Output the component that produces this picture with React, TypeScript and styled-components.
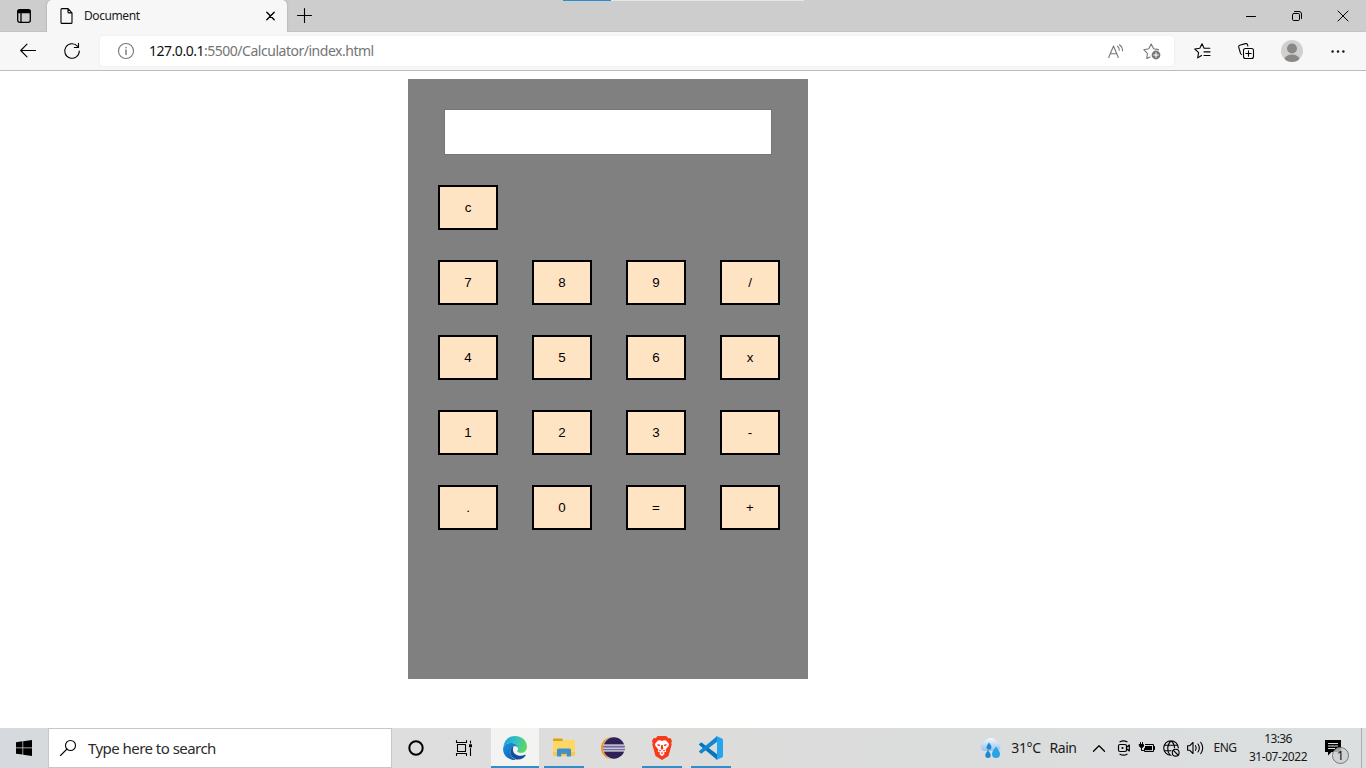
import React from 'react';
import styled, { createGlobalStyle } from 'styled-components';

const ui = '"Noto Sans", "Open Sans", sans-serif';

const GlobalStyle = createGlobalStyle`
  * { box-sizing: border-box; }
  html, body { margin: 0; padding: 0; background: #fff; overflow: hidden; }
`;

const Screen = styled.div`
  display: flex;
  flex-direction: column;
  width: 1366px;
  height: 768px;
  font-family: ${ui};
  background: #fff;
`;

const Glyph = styled.svg<{ $stroke?: number }>`
  display: block;
  flex: none;
  overflow: visible;
  fill: none;
  stroke: ${p => (p.$stroke === 0 ? 'none' : 'currentColor')};
  stroke-width: ${p => p.$stroke ?? 1.1};
  stroke-linecap: round;
  stroke-linejoin: round;
`;

const Slot = styled.div<{ $w: number }>`
  flex: none;
  width: ${p => p.$w}px;
  height: 100%;
  display: flex;
  align-items: center;
  justify-content: center;
`;

const Label = styled.span<{ $size: number; $track?: number; $color?: string }>`
  font-size: ${p => p.$size}px;
  letter-spacing: ${p => p.$track ?? 0}px;
  color: ${p => p.$color ?? '#1a1a1a'};
  line-height: 18px;
  white-space: pre;
`;

const TabStrip = styled.header`
  position: relative;
  display: flex;
  height: 32px;
  background: #cdcdcd;
  box-shadow: inset 0 -1px 0 #c3c3c3;
`;

const Progress = styled.div`
  position: absolute;
  top: 0;
  left: 563px;
  width: 241px;
  height: 1px;
  background: linear-gradient(to right, #2690cf 48px, #e6e6e6 48px);
`;

const Tab = styled.div`
  display: flex;
  align-items: center;
  width: 240px;
  height: 32px;
  padding: 0 12px 0 13px;
  background: #f7f7f7;
  border-radius: 5px 5px 0 0;
  box-shadow: 0 0 2px rgba(0, 0, 0, 0.25);
  clip-path: inset(0 -3px 0 -3px);
`;

const TabTitle = styled(Label)`
  flex: 1;
  margin-left: 11px;
`;

const WindowButtons = styled.div`
  display: flex;
  margin-left: auto;
`;

const Toolbar = styled.nav`
  display: flex;
  align-items: center;
  height: 39px;
  padding: 0 5px 0 6px;
  background: #f7f7f7;
  border-bottom: 1px solid #bcbcbc;
`;

const AddressBar = styled.div`
  display: flex;
  align-items: center;
  width: 1074px;
  height: 30px;
  margin: 0 6px;
  padding: 0 4px 0 18px;
  background: #fff;
  border-radius: 3px;
  box-shadow: 0 0 2px rgba(0, 0, 0, 0.08);
`;

const Url = styled(Label)`
  flex: 1;
  margin-left: 15px;
`;

const Muted = styled.span`
  color: #757575;
`;

const Page = styled.main`
  flex: 1;
  padding: 8px 0 0 408px;
`;

const Calculator = styled.section`
  display: flex;
  flex-direction: column;
  width: 400px;
  height: 600px;
  padding: 30px 28px 0 30px;
  background: #808080;
`;

const Display = styled.input`
  width: 328px;
  height: 46px;
  margin: 0 0 30px 6px;
  padding: 1px 2px;
  background: #fff;
  border: 1px solid #767676;
  border-radius: 0;
  outline: none;
`;

const KeyRow = styled.div`
  display: flex;
  gap: 34px;
  margin-bottom: 30px;
`;

const Key = styled.button`
  width: 60px;
  height: 45px;
  padding: 0 0 1px;
  font: 13.333px "Liberation Sans", Arial, sans-serif;
  color: #000;
  background: #ffe4c4;
  border: 2px solid #000;
  border-radius: 0;
`;

const Taskbar = styled.footer`
  display: flex;
  align-items: center;
  height: 40px;
  background: linear-gradient(to right, #d6d9dd, #dedede 400px, #dcdcdb 740px, #dbdddd 1000px, #dcdfe0);
`;

const SearchBox = styled.div`
  display: flex;
  align-items: center;
  width: 344px;
  height: 40px;
  padding-left: 11px;
  background: #fff;
  border: 1px solid #c6c6c6;
`;

const SearchText = styled(Label)`
  margin-left: 12px;
`;

const Apps = styled.div`
  display: flex;
  gap: 1px;
  height: 100%;
  margin-left: 3px;
`;

const AppButton = styled.div<{ $state: 'active' | 'running' | 'idle' }>`
  display: flex;
  align-items: center;
  justify-content: center;
  width: 48px;
  height: 40px;
  background-color: ${p => (p.$state === 'active' ? '#f3f3f1' : 'transparent')};
  background-image: ${p => (p.$state === 'idle' ? 'none' : 'linear-gradient(#2d8fcb, #2d8fcb)')};
  background-repeat: no-repeat;
  background-position: center bottom;
  background-size: ${p => (p.$state === 'active' ? '48px' : '40px')} 2px;
`;

const Tray = styled.div`
  display: flex;
  align-items: center;
  height: 100%;
  margin-left: auto;
`;

const Clock = styled.div`
  display: flex;
  flex-direction: column;
  align-items: center;
  width: 70px;
  margin-right: 5px;
  padding-bottom: 1px;
`;

const Notifications = styled.div`
  position: relative;
  display: flex;
  align-items: center;
  width: 43px;
  height: 100%;
  padding-left: 7px;
`;

const Badge = styled.span`
  position: absolute;
  left: 14px;
  top: 19px;
  width: 17px;
  height: 17px;
  border: 1px solid #777;
  border-radius: 50%;
  background: rgba(205, 205, 205, 0.8);
  font-size: 13px;
  line-height: 15px;
  text-align: center;
  color: #111;
`;

const ShowDesktop = styled.div`
  width: 5px;
  height: 100%;
  border-left: 1px solid #a9abad;
`;

const rows = [['c'], ['7', '8', '9', '/'], ['4', '5', '6', 'x'], ['1', '2', '3', '-'], ['.', '0', '=', '+']];

function EdgeLogo() {
  return (
    <Glyph width="24" height="24" viewBox="0 0 24 24" $stroke={0}>
      <defs>
        <linearGradient id="edgeTop" x1="0" y1="0.3" x2="1" y2="0.5">
          <stop offset="0" stopColor="#1f9fdc" />
          <stop offset=".5" stopColor="#2fc3c6" />
          <stop offset="1" stopColor="#62d75a" />
        </linearGradient>
        <linearGradient id="edgeLeft" x1="0" y1="0" x2=".6" y2="1">
          <stop offset="0" stopColor="#1b97df" />
          <stop offset="1" stopColor="#1260b4" />
        </linearGradient>
      </defs>
      <path fill="url(#edgeTop)" d="M.4 10.8C1.2 4.400 6 0 12 0c7.500 0 12 5.300 12 10.700 0 3.800-2.800 6.100-6.100 6.100-2.300 0-3.700-.7-3.700-1.500 0-.5.9-1 .9-2.700C15.100 9.500 12 7 8.200 7 4.600 7 1.700 8.600.4 10.800Z" />
      <path fill="url(#edgeLeft)" d="M.2 11.700C.8 8.900 4 6.900 8 6.900c4 0 7.100 2.700 7.100 5.400-.8-1.500-2.200-2.300-3.500-2.300-2.300.8-4.200 3-4.200 5.900 0 3.300 2.100 6.500 5.500 8C5.800 24.500-.8 19 .2 11.700Z" />
      <path fill="#124f9b" d="M10.700 10.300c-2 1-3.300 3-3.300 5.600 0 4 3.300 7.600 7.800 7.700 3 0 5.800-1.900 7.400-4.200.3-.5 0-.8-.5-.6-5.500 2.500-12.200.2-12.200-5.500 0-1.100.3-2.100.8-3Z" />
    </Glyph>
  );
}

function FolderLogo() {
  return (
    <Glyph width="22" height="20" viewBox="0 0 22 20" $stroke={0}>
      <path fill="#dfa20c" d="M0 1.500C0 1 .4.6 1 .6h8l1.500 2.400H0Z" />
      <path fill="#ffd767" d="M0 3h10.500l1-1.200H21c.6 0 1 .4 1 1V18H0Z" />
      <path fill="#f8c94f" d="M0 14h22v4H0Z" />
      <path fill="#3c8fd0" d="M4 18.500V12.200c0-1 .7-1.700 1.700-1.700h10.600c1 0 1.700.7 1.700 1.700v6.300h-4.200v-4H8.200v4Z" />
      <path fill="#2477bd" d="M8.200 14.500h5.600v1.200H8.200Z" />
    </Glyph>
  );
}

function EclipseLogo() {
  return (
    <Glyph width="24" height="22" viewBox="0 0 24 22" $stroke={0}>
      <circle cx="10.800" cy="11" r="10.800" fill="#f7941e" />
      <circle cx="13" cy="11" r="11" fill="#dedddc" />
      <circle cx="13" cy="11" r="10.700" fill="#2c2255" />
      <path fill="#fff" d="M2.500 7.500h21v1.200h-21ZM2.200 10.400h21.600v1.300H2.200ZM2.500 13.200h21v1.200h-21Z" />
      <path fill="#8b83ba" d="M2.300 8.700h21.400v1.100H2.300ZM2.300 12.200h21.400v1H2.300Z" />
    </Glyph>
  );
}

function BraveLogo() {
  return (
    <Glyph width="20" height="24" viewBox="0 0 20 24" $stroke={0}>
      <path fill="#f83a1b" d="M5.700 0h8.600l2 2.200 2-.2L20 4.700 19.300 7l.4 1.400-3.200 11.500L10 24l-6.500-4.100L.3 8.400.7 7 0 4.700 1.700 2l2 .2Z" />
      <path fill="#fff" d="M5.900 4.400 8 4.200 10 4.900l2-.7 2.100.2 3 3.600-.6 2.100-2.800 3.400.5 1.900-2.500 1.300 1 1.300L10 20.300 7.300 18l1-1.300-2.500-1.300.5-1.900L3.500 10.100 2.900 8Z" />
      <path fill="#f83a1b" d="m5.100 8 3.200.8-.7 1.500-1.500-.2ZM14.900 8l-3.200.8.7 1.500 1.500-.2ZM9.200 9h1.600l.5 3.900-1.300.8-1.300-.8ZM6.500 13.500l3 1.300-1.700.8ZM13.500 13.500l-3 1.300 1.700.8ZM8.700 17l1.300-.8 1.300.8-1.300 1Z" />
    </Glyph>
  );
}

function CodeLogo() {
  return (
    <Glyph width="24" height="24" viewBox="0 0 24 24" $stroke={0}>
      <path fill="#0874bc" d="M0 8.300 1.600 6.800Q2.200 6.400 2.900 6.800L18 18.200v5.600L.2 8.900Q-.2 8.600 0 8.300Z" />
      <path fill="#1187cf" d="M0 15.700 1.600 17.200Q2.200 17.600 2.900 17.200L18 5.800V.2L.2 15.100Q-.2 15.400 0 15.700Z" />
      <path fill="#25a5f0" d="M17.500 24c-.6-.1-.9-.4-1.200-.8.7.6 1.700.1 1.700-.8V1.600c0-.9-1-1.400-1.700-.8.3-.4.6-.7 1.200-.8L23 2.500q1 .5 1 1.500v16q0 1-1 1.500Z" />
    </Glyph>
  );
}

function WeatherIcon() {
  return (
    <Glyph width="22" height="20" viewBox="0 0 22 20" $stroke={0}>
      <defs>
        <linearGradient id="cloud" x1="0" y1="0" x2="0" y2="1">
          <stop offset="0" stopColor="#f3f8ff" />
          <stop offset="1" stopColor="#99bfeb" />
        </linearGradient>
      </defs>
      <path fill="url(#cloud)" d="M5 13a4.800 4.800 0 0 1-.3-9.500A6.700 6.700 0 0 1 17 4.500a4.400 4.400 0 0 1 .5 8.500Z" />
      <path fill="#168bd3" d="M9 4.500c1.500 2.300 2.500 3.300 2.500 4.800a2.500 2.500 0 0 1-5 0c0-1.500 1-2.500 2.500-4.800ZM8 12c1.600 2.500 2.700 3.500 2.700 5.200a2.700 2.700 0 0 1-5.400 0c0-1.700 1.100-2.700 2.700-5.200Z" />
      <path fill="#26a5e5" d="M16 8.500c2.400 3.600 4 5.200 4 7.400a4 4 0 0 1-8 0c0-2.200 1.600-3.800 4-7.400Z" />
    </Glyph>
  );
}

export default function App() {
  return (
    <Screen>
      <GlobalStyle />
      <TabStrip>
        <Progress />
        <Slot $w={47}>
          <Glyph width="14" height="14" viewBox="0 0 14 14" $stroke={1.3}>
            <rect x=".7" y=".7" width="12.600" height="12.600" rx="2" />
            <path fill="currentColor" d="M1 1.500h12v2H1Z" />
            <path d="M4 4v9" />
          </Glyph>
        </Slot>
        <Tab>
          <Glyph width="13" height="16" viewBox="0 0 13 16">
            <path d="M2 .6h6l4 4.300v9.500q0 1-1 1H2q-1 0-1-1V1.600q0-1 1-1ZM8 .6v3.300q0 1 1 1h3" />
          </Glyph>
          <TabTitle $size={12} $track={-0.42}>Document</TabTitle>
          <Glyph width="9" height="10" viewBox="0 0 9 10" $stroke={1.4}>
            <path d="m.8 1.300 7.400 7.400M8.200 1.300.800 8.700" />
          </Glyph>
        </Tab>
        <Slot $w={35}>
          <Glyph width="15" height="16" viewBox="0 0 15 16">
            <path d="M7.500.5v14M.5 7.500h14" />
          </Glyph>
        </Slot>
        <WindowButtons>
          <Slot $w={46}>
            <Glyph width="10" height="10" viewBox="0 0 10 10" $stroke={1}>
              <path d="M.5 5.500h9" />
            </Glyph>
          </Slot>
          <Slot $w={46}>
            <Glyph width="10" height="10" viewBox="0 0 10 10" $stroke={1}>
              <rect x=".5" y="2.500" width="7" height="7" rx="1.200" />
              <path d="M2.500.5H7q2.500 0 2.500 2.500v4.500" />
            </Glyph>
          </Slot>
          <Slot $w={46}>
            <Glyph width="10" height="10" viewBox="0 0 10 10" $stroke={1}>
              <path d="m0 0 10 10M10 0 0 10" />
            </Glyph>
          </Slot>
        </WindowButtons>
      </TabStrip>

      <Toolbar>
        <Slot $w={44}>
          <Glyph width="16" height="14" viewBox="0 0 16 14">
            <path d="M15.500 6.500H.7M7 .2.700 6.500 7 12.800" />
          </Glyph>
        </Slot>
        <Slot $w={44}>
          <Glyph width="16" height="16" viewBox="0 0 16 16">
            <path d="M15.300 8A7.300 7.300 0 1 1 13.600 3.300M14.500.3v4.200h-4.200" />
          </Glyph>
        </Slot>
        <AddressBar>
          <Glyph width="16" height="16" viewBox="0 0 16 16" color="#767676">
            <circle cx="8" cy="8" r="7.500" />
            <path d="M8 7v4.500M8 4.500v.3" strokeWidth="1.4" />
          </Glyph>
          <Url $size={14} $track={-0.48} $color="#111">127.0.0.1<Muted>:5500/Calculator/index.html</Muted></Url>
          <Slot $w={36}>
            <Glyph width="16" height="15" viewBox="0 0 16 15" color="#767676">
              <path d="M.7 13.500 5.500 2l4.800 11.500M2.300 9.700h6.400M9.500 2.300q1.800 1.400 1.800 4M11.500.8q3 2 3 6" />
            </Glyph>
          </Slot>
          <Slot $w={36}>
            <Glyph width="18" height="17" viewBox="0 0 18 17" color="#767676">
              <path d="M7 14 3.800 15.500 4.400 10.300.8 6.700l5-.9L8.200 1l2.400 4.700 5 .9" />
              <circle cx="13" cy="12" r="4.400" fill="currentColor" stroke="none" />
              <path d="M13 9.700v4.600M10.700 12h4.600" stroke="#fff" />
            </Glyph>
          </Slot>
        </AddressBar>
        <Slot $w={44}>
          <Glyph width="17" height="16" viewBox="0 0 17 16">
            <path d="M7.500 12.500 3.700 14.900 4.600 9.600.8 6 5.800 5.300 8 .8l2.100 4.500h5.700M10 8.900h6M10 12.500h6" />
          </Glyph>
        </Slot>
        <Slot $w={44}>
          <Glyph width="16" height="16" viewBox="0 0 16 16">
            <rect x="5.500" y="5.500" width="10" height="10" rx="2" />
            <path d="M10.500 7.800v5.400M7.800 10.500h5.400M3.500 11.500Q2.600 11 2.400 10L.7 4.200q-.4-1.400 1-1.900L7.500.6q1.400-.4 1.900.9l.5 1.600" />
          </Glyph>
        </Slot>
        <Slot $w={47}>
          <Glyph width="22" height="22" viewBox="0 0 22 22" $stroke={0}>
            <defs><clipPath id="avatar"><circle cx="11" cy="11" r="11" /></clipPath></defs>
            <circle cx="11" cy="11" r="11" fill="#d2d0ce" />
            <g clipPath="url(#avatar)" fill="#8a8886">
              <circle cx="11" cy="8.500" r="5" />
              <ellipse cx="11" cy="19.500" rx="7.500" ry="5" />
            </g>
          </Glyph>
        </Slot>
        <Slot $w={46}>
          <Glyph width="14" height="3" viewBox="0 0 14 3" $stroke={0}>
            <g fill="#111">
              <circle cx="1.600" cy="1.500" r="1.200" /><circle cx="7" cy="1.500" r="1.200" /><circle cx="12.400" cy="1.500" r="1.200" />
            </g>
          </Glyph>
        </Slot>
      </Toolbar>

      <Page>
        <Calculator>
          <Display type="text" aria-label="Result" />
          {rows.map(keys => (
            <KeyRow key={keys[0]}>
              {keys.map(k => <Key key={k}>{k}</Key>)}
            </KeyRow>
          ))}
        </Calculator>
      </Page>

      <Taskbar>
        <Slot $w={48}>
          <Glyph width="16" height="16" viewBox="0 0 16 16" $stroke={0}>
            <path fill="#000" d="M0 2.200 6.500 1.300v6.300H0ZM7.200 1.200 16 0v7.600H7.200ZM0 8.300h6.500v6.300L0 13.800ZM7.200 8.300H16V16l-8.800-1.200Z" />
          </Glyph>
        </Slot>
        <SearchBox>
          <Glyph width="16" height="16" viewBox="0 0 16 16">
            <circle cx="10.500" cy="5.500" r="5" />
            <path d="M7 9 .5 15.500" />
          </Glyph>
          <SearchText $size={15} $track={-0.54} $color="#2b2b2b">Type here to search</SearchText>
        </SearchBox>
        <Slot $w={48}>
          <Glyph width="16" height="16" viewBox="0 0 16 16" $stroke={2}>
            <circle cx="8" cy="8" r="6.700" />
          </Glyph>
        </Slot>
        <Slot $w={48}>
          <Glyph width="16" height="16" viewBox="0 0 16 16">
            <path d="M.5.500v2h10v-2M.5 15.500v-2h10v2M1.500 4.500h8v7h-8ZM14.500 1v2M14.500 8.500v7" />
            <path d="M13 4.300h3v3h-3Z" fill="currentColor" stroke="none" />
          </Glyph>
        </Slot>
        <Apps>
          <AppButton $state="active"><EdgeLogo /></AppButton>
          <AppButton $state="running"><FolderLogo /></AppButton>
          <AppButton $state="idle"><EclipseLogo /></AppButton>
          <AppButton $state="running"><BraveLogo /></AppButton>
          <AppButton $state="running"><CodeLogo /></AppButton>
        </Apps>
        <Tray>
          <Slot $w={38}><WeatherIcon /></Slot>
          <Slot $w={32}><Label $size={14} $track={-0.4}>31°C</Label></Slot>
          <Slot $w={42}><Label $size={14} $track={-0.4}>Rain</Label></Slot>
          <Slot $w={29}>
            <Glyph width="12" height="7" viewBox="0 0 12 7" $stroke={1.3}><path d="M.5 6.300 6 .8l5.500 5.500" /></Glyph>
          </Slot>
          <Slot $w={22}>
            <Glyph width="12" height="16" viewBox="0 0 12 16" $stroke={1.2}>
              <rect x=".5" y="4.500" width="8" height="7" rx="1.500" />
              <circle cx="4.500" cy="8" r=".5" />
              <path d="M8.500 7.200 11.300 5v6L8.500 8.800M2 1.800Q5.500-.2 9 1.800M2 14.200q3.500 2 7 0" />
            </Glyph>
          </Slot>
          <Slot $w={24}>
            <Glyph width="16" height="12" viewBox="0 0 16 12" $stroke={1}>
              <path fill="currentColor" d="M.5 2.500h4v1.500Q4 5.500 2.500 5.500T.5 4Z" />
              <path d="M1.500.5V2M3.500.5V2M2.500 5.500v3h2M6.500 2.500h8v7h-9V6.500M15.500 4.500v3" />
              <path fill="currentColor" stroke="none" d="M6 4h7v4.200H6Z" />
            </Glyph>
          </Slot>
          <Slot $w={25}>
            <Glyph width="17" height="17" viewBox="0 0 17 17">
              <path d="M8 15.300A7.300 7.300 0 1 1 15.300 8M7 15.200C3.800 11.500 3.800 4.500 8 .8c2.500 2 3.500 4.500 3.500 7M1.500 5.300h13M1.500 10.700H8" />
              <circle cx="12.700" cy="12.700" r="3.400" /><path d="m10.400 10.400 4.600 4.600" />
            </Glyph>
          </Slot>
          <Slot $w={23}>
            <Glyph width="17" height="14" viewBox="0 0 17 14">
              <path d="M.6 4.700h2.200L6 1.500v11L2.800 9.300H.6ZM8.500 4.700q1.500 2.300 0 4.600M11 3q2.700 4 0 8M13.700 1.300q4 5.700 0 11.400" />
            </Glyph>
          </Slot>
          <Slot $w={36}><Label $size={12} $track={-0.5}>ENG</Label></Slot>
          <Clock>
            <Label $size={12} $track={-0.6}>13:36</Label>
            <Label $size={12} $track={-0.45}>31-07-2022</Label>
          </Clock>
          <Notifications>
            <Glyph width="16" height="16" viewBox="0 0 16 16" $stroke={0}>
              <path fill="#000" d="M0 0h16v12H6.500L3 15.500V12H0Z" />
              <path fill="#dcdfe0" d="M3 3h10v1H3ZM3 5.500h10v1H3ZM3 8h7v1H3Z" />
            </Glyph>
            <Badge>1</Badge>
          </Notifications>
          <ShowDesktop />
        </Tray>
      </Taskbar>
    </Screen>
  );
}
